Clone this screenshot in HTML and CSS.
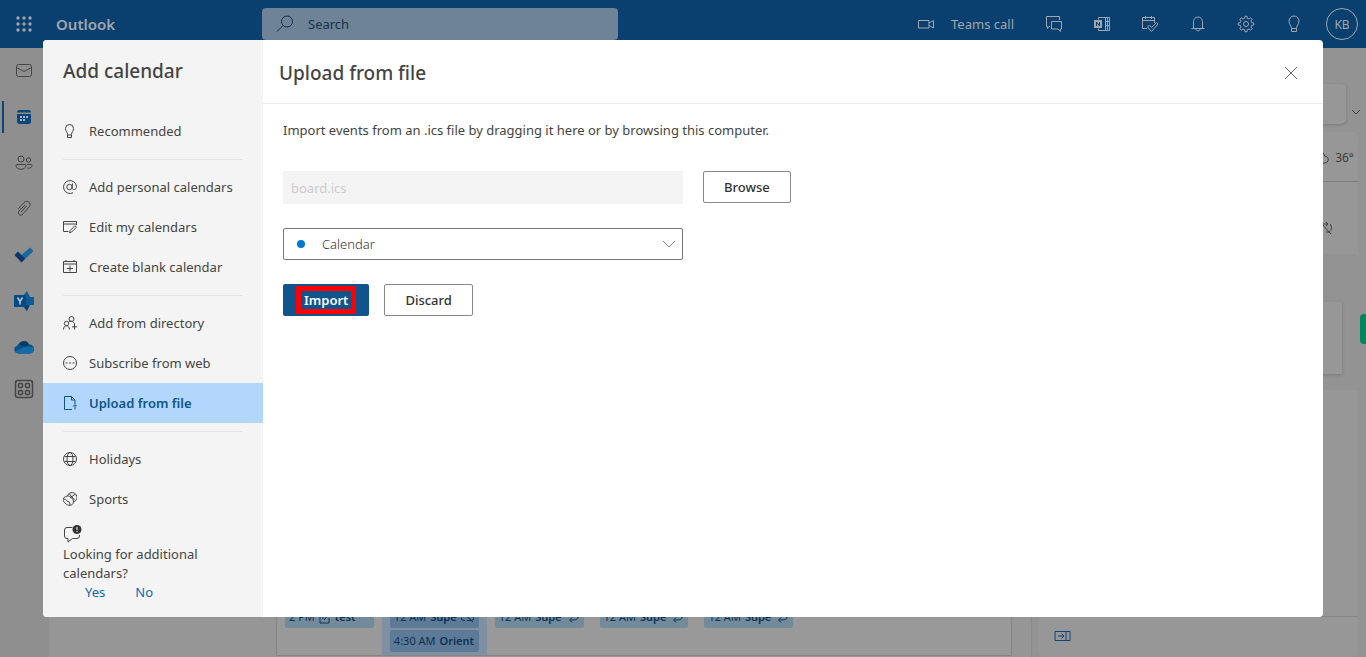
FILE: index.html
```html
<!DOCTYPE html>
<html lang="en">
<head>
<meta charset="utf-8">
<title>Outlook - Add calendar</title>
<link rel="stylesheet" href="styles.css">
</head>
<body>
<div class="app">
  <header class="topbar">
    <button class="waffle" aria-label="App launcher">
      <svg width="16" height="16" viewBox="0 0 16 16" fill="currentColor"><circle cx="2" cy="2" r="1.7"/><circle cx="8" cy="2" r="1.7"/><circle cx="14" cy="2" r="1.7"/><circle cx="2" cy="8" r="1.7"/><circle cx="8" cy="8" r="1.7"/><circle cx="14" cy="8" r="1.7"/><circle cx="2" cy="14" r="1.7"/><circle cx="8" cy="14" r="1.7"/><circle cx="14" cy="14" r="1.7"/></svg>
    </button>
    <span class="brand">Outlook</span>
    <label class="search">
      <svg class="line" width="18" height="18" viewBox="0 0 18 18"><circle cx="11" cy="6.5" r="5.5"/><path d="M7 10.5L1 16.5"/></svg>
      <input type="text" placeholder="Search" aria-label="Search">
    </label>
    <div class="tools">
      <button class="teams"><svg class="line" width="18" height="16" viewBox="0 0 18 16"><path d="M1.5 4.500h10.500v7.500H1.500zM12 7l4.500-2.500v7.500L12 9.500"/></svg>Teams call</button>
      <button class="tool" aria-label="Chat"><svg class="line" width="18" height="18" viewBox="0 0 18 18"><path d="M5 11.500H4L2.500 13.500V11.500H1.500V1.500h13V5M6.500 6.500h10v7.500h-1v2.500l-2.500-2.500H6.500z"/></svg></button>
      <button class="tool" aria-label="OneNote"><svg class="line" width="18" height="18" viewBox="0 0 18 18"><path d="M5.500 4.500v-2h11v13h-11v-2M12.500 2.500v13M12.500 6.500h4M12.500 10.500h4M14.500 2.500v13"/><path fill="currentColor" stroke="none" d="M1 5h8v8H1z"/><path d="M3.500 11V7l3 4V7" stroke="#0a406f"/></svg></button>
      <button class="tool" aria-label="My Day"><svg class="line" width="18" height="18" viewBox="0 0 18 18"><path d="M6 13.500H1.500V2.500h12V8M1.500 5.500h12M4.500 1v3M10.500 1v3M6.500 12l2-2 2 2.500 5-5 1.500 1.500-6.500 7.500z"/></svg></button>
      <button class="tool" aria-label="Notifications"><svg class="line" width="18" height="18" viewBox="0 0 18 18"><path d="M4.500 13V6.500a4.500 4.500 0 0 1 9 0V13M2.500 13.500h13M7 14c0 2.500 4 2.500 4 0"/></svg></button>
      <button class="tool" aria-label="Settings"><svg class="line" width="18" height="18" viewBox="0 0 18 18"><circle cx="9" cy="9" r="2.500"/><path d="M7.700 3.300L8 1.300h2l.3 2 1.800.7L13.700 2.800l1.500 1.500L14 5.900l.7 1.800 2 .3v2l-2 .3-.7 1.800 1.200 1.600-1.500 1.500-1.600-1.200-1.800.7-.3 2H8l-.3-2-1.800-.7-1.600 1.200-1.500-1.500L4 12.100l-.7-1.800-2-.3V8l2-.3L4 5.900 2.800 4.300l1.500-1.500L5.900 4z"/></svg></button>
      <button class="tool" aria-label="Tips"><svg class="line" width="18" height="18" viewBox="0 0 18 18"><path d="M6.500 16.500v-3C6.500 10.500 4 9.500 4 6a5 5 0 0 1 10 0c0 3.500-2.500 4.500-2.500 7.500v3zM6.500 13.500h5"/></svg></button>
      <button class="tool" aria-label="Account"><span class="avatar">KB</span></button>
    </div>
  </header>

  <div class="body">
    <nav class="rail" aria-label="Apps">
      <button aria-label="Mail"><svg class="line" width="18" height="18" viewBox="0 0 18 18"><rect x="1.500" y="2.500" width="15" height="12" rx="2"/><path d="M1.500 5.500L9 9.500l7.500-4"/></svg></button>
      <button class="current" aria-label="Calendar"><svg width="18" height="18" viewBox="0 0 18 18"><path fill="#0b477b" d="M2 4.500Q2 2 4.500 2h9Q16 2 16 4.500zM2 6h14v7.500q0 2.500-2.500 2.500h-9Q2 16 2 13.500z"/><path fill="#a5b2bc" d="M5 8h2v2H5zM8 8h2v2H8zM11 8h2v2h-2zM5 11h2v2H5zM8 11h2v2H8z"/></svg></button>
      <button aria-label="People"><svg class="line" width="18" height="18" viewBox="0 0 18 18"><circle cx="6" cy="5" r="3"/><circle cx="13.500" cy="6" r="2.200"/><path d="M2 10.500h8q1 0 1 1c0 5-10 5-10 0q0-1 1-1zM12 10.500h4q1 0 1 1c0 2-2 3-4.500 2.500"/></svg></button>
      <button aria-label="Files"><svg class="line" width="18" height="18" viewBox="0 0 18 18"><path d="M3 9l6-6.500c3-3 8 .500 5.500 4L8 14c-2.500 3-6 0-4-3l6-6M6 12l5.500-6"/></svg></button>
      <button aria-label="To Do"><svg width="20" height="18" viewBox="0 0 20 18"><path fill="#1c67a0" d="M7.500 16.500L4 12 16 1.500 19.500 5z"/><path fill="#0c356b" d="M.5 9L4 5.500 11 12.500 7.500 16.500z"/></svg></button>
      <button aria-label="Yammer"><svg width="20" height="20" viewBox="0 0 20 20"><path fill="#0d5c93" d="M9 5l4-5 3 6h4v8h-4l-3 6-4-5z"/><path fill="#073f70" d="M9 14h6l-2 6z"/><rect width="12" height="12" y="4" rx="1" fill="#074a83"/><path d="M3.500 6.500L6 10.500l2.500-4M6 10.500v3" fill="none" stroke="#b8c3cc" stroke-width="1.600"/></svg></button>
      <button aria-label="OneDrive"><svg width="20" height="14" viewBox="0 0 20 14"><path fill="#0c4f87" d="M3 6C6 0 13-1 15 4.500c3 0 5 2 5 4.500s-2 4.500-5 4.500H4.500C-.5 13.500-1 7 3 6z"/><path fill="#136ba3" d="M1 11.500L12 6l7.500 1.500c1.500 4-1.500 6-4.500 6H4.500q-2 0-3.500-2z"/><path fill="#063963" d="M5 4.500C8 0 13 0 15 4.500L12 7z"/></svg></button>
      <button class="more" aria-label="More apps"><svg class="line" width="20" height="20" viewBox="0 0 20 20" stroke-width="1.500"><rect x="1.500" y="1.500" width="17" height="17" rx="2.500"/><rect x="4.500" y="4.500" width="4" height="4" rx="1"/><rect x="11.500" y="4.500" width="4" height="4" rx="1"/><rect x="4.500" y="11.500" width="4" height="4" rx="1"/><rect x="11.500" y="11.500" width="4" height="4" rx="1"/></svg></button>
    </nav>

    <main class="calendar">
      <div class="grid">
        <div class="day"><div class="event"><span>2 PM</span><svg class="line" width="12" height="14" viewBox="0 0 12 14"><path d="M10 2H1v11h9V8M3 5h4M3 8h2M5 10l6-7"/></svg><b>test</b></div></div>
        <div class="day today"><div class="event"><span>12 AM</span><b>Supe</b><svg class="line" width="13" height="12" viewBox="0 0 13 12"><path d="M4 9.500H3a3 3 0 0 1 0-6h5M6 9.500h4a3 3 0 0 0 0-6M1 1l11 10"/></svg></div><div class="event"><span>4:30 AM</span><b>Orient</b></div></div>
        <div class="day"><div class="event"><span>12 AM</span><b>Supe</b><svg class="line" width="13" height="12" viewBox="0 0 13 12"><path d="M2 6c0-4 9-4 10 0 0 3-3 3-8 3M6 6.500L3.500 9 6 11.500"/></svg></div></div>
        <div class="day"><div class="event"><span>12 AM</span><b>Supe</b><svg class="line" width="13" height="12" viewBox="0 0 13 12"><path d="M2 6c0-4 9-4 10 0 0 3-3 3-8 3M6 6.500L3.500 9 6 11.500"/></svg></div></div>
        <div class="day"><div class="event"><span>12 AM</span><b>Supe</b><svg class="line" width="13" height="12" viewBox="0 0 13 12"><path d="M2 6c0-4 9-4 10 0 0 3-3 3-8 3M6 6.500L3.500 9 6 11.500"/></svg></div></div>
        <div class="day"></div>
        <div class="day"></div>
      </div>
    </main>

    <aside class="side">
      <div class="ribbon"><div class="ribbon-box"></div><svg class="line" width="10" height="16" viewBox="0 0 10 16"><path d="M1 2l4 4 4-4"/></svg></div>
      <div class="agenda">
        <div class="weather"><svg class="line" width="16" height="14" viewBox="0 0 16 14"><path d="M4 12a3.500 3.500 0 0 1 0-7C5 0 11 0 11.500 5c5 0 5 7 0 7z"/></svg>36°</div>
        <div class="slot"><svg class="line" width="13" height="14" viewBox="0 0 13 14"><path d="M4 11H3a4 4 0 0 1 0-8h6M7 1l2 2-2 2M7 11h3c3-1 3-6 1-8M2 2l10 11"/></svg></div>
        <div class="gap"><div class="card"></div></div>
        <div class="tasks"></div>
        <div class="foot"><svg class="line" width="17" height="12" viewBox="0 0 17 12"><path d="M1 1.500h15v9H1zM12 1.500v9M4 6h6M7.500 3.500L10 6 7.500 8.500"/></svg></div>
      </div>
      <button class="feedback" aria-label="Feedback"></button>
    </aside>
  </div>
</div>

<div class="dialog" role="dialog" aria-label="Add calendar">
  <div class="menu">
    <h1>Add calendar</h1>
    <nav>
      <button class="item"><svg class="line" viewBox="0 0 14 14"><path d="M4.500 13.500v-3C4.500 8 2.500 7.500 2.500 4.500a4 4 0 0 1 8 0c0 3-2 3.500-2 6v3zM4.500 11h4"/></svg>Recommended</button>
      <hr>
      <button class="item"><svg class="line" viewBox="0 0 14 14"><circle cx="6.500" cy="7" r="2.700"/><path d="M9.500 3.500L9 8c0 2 4.500 2.500 4.500-1.500A6.500 6.500 0 1 0 10 12.800"/></svg>Add personal calendars</button>
      <button class="item"><svg class="line" viewBox="0 0 14 14"><path d="M5.500 11.500h-5v-10h13V5M.5 4h13M6.500 12.800l.7-2.300L12 5.700l1.500 1.500-4.800 4.800z"/></svg>Edit my calendars</button>
      <button class="item"><svg class="line" viewBox="0 0 14 14"><path d="M.5 1.500h13v11H.5zM.5 4h13M3 0v1.500M11 0v1.500M7 5.500v6M4 8.500h6"/></svg>Create blank calendar</button>
      <hr>
      <button class="item"><svg class="line" viewBox="0 0 14 14"><circle cx="8.500" cy="3" r="2.500"/><circle cx="3.500" cy="7.500" r="2.200"/><path d="M.5 13.500c0-5 6-5 6 0M5.500 6c2-1.500 5-1 6 2M11.500 8v5.500M9 10.800h5"/></svg>Add from directory</button>
      <button class="item"><svg class="line" viewBox="0 0 14 14"><circle cx="7" cy="7" r="6.500"/><path d="M2.500 7h2M6 7h2M9.500 7h2"/></svg>Subscribe from web</button>
      <button class="item selected"><svg class="line" viewBox="0 0 14 14"><path d="M9 13.500H1.500V.5h7L12 4v4M8.500.5V4H12M12 13.500V9M10 10.500L12 8.500l2 2"/></svg>Upload from file</button>
      <hr>
      <button class="item"><svg class="line" viewBox="0 0 14 14"><circle cx="7" cy="7" r="6.500"/><ellipse cx="7" cy="7" rx="3" ry="6.500"/><path d="M1.500 4.500h11M1.500 9.500h11"/></svg>Holidays</button>
      <button class="item"><svg class="line" viewBox="0 0 14 14"><path d="M4.500 4a4.800 4.800 0 1 1 6 6M4.500 4c3 0 6 3 6 6M6 1.500l6 7M12.500 2L7 6M4.500 4C-1 5-.5 9 2 11c3 3.500 8 3 8.500-1M1 7c3 0 2 2.500 4 2.500S7 12 7 13"/></svg>Sports</button>
    </nav>
    <div class="ask">
      <svg width="20" height="18" viewBox="0 0 20 18"><path d="M9.500 2.500H4Q1.500 2.500 1.500 5v6q0 2.500 2.500 2.500h1V17l4.500-3.500H14q2.500 0 2.500-2.500v-1" fill="none" stroke="#444"/><circle cx="14" cy="4.500" r="4.500" fill="#333"/><path d="M14 2v3M14 6v1.200" stroke="#fff"/></svg>
      <p>Looking for additional calendars?</p>
      <div class="answers"><a href="#yes">Yes</a><a href="#no">No</a></div>
    </div>
  </div>

  <section class="panel">
    <div class="panel-head">
      <h2>Upload from file</h2>
      <button class="close" aria-label="Close"><svg class="line" width="14" height="14" viewBox="0 0 14 14"><path d="M1 1l12 12M13 1L1 13"/></svg></button>
    </div>
    <form class="form">
      <label class="intro" for="file">Import events from an .ics file by dragging it here or by browsing this computer.</label>
      <div class="row browse"><input class="file" id="file" type="text" value="board.ics" disabled><button class="btn" type="button">Browse</button></div>
      <div class="picker">
        <select aria-label="Calendar"><option>Calendar</option></select>
        <span class="dot"></span>
        <svg class="line chevron" width="14" height="8" viewBox="0 0 14 8"><path d="M1 1l6 6 6-6"/></svg>
      </div>
      <div class="row actions"><button class="btn primary" type="button"><span class="mark">Import</span></button><button class="btn" type="button">Discard</button></div>
    </form>
  </section>
</div>
</body>
</html>
```

FILE: styles.css
```css
* { box-sizing: border-box; }
html, body { height: 100%; }
body { margin: 0; font: 13px/20px "Noto Sans", "Open Sans", sans-serif; color: #444; overflow: hidden; }
button { border: 0; background: none; padding: 0; font: inherit; color: inherit; display: flex; align-items: center; justify-content: center; }
.line { fill: none; stroke: currentColor; flex: none; }

.app { height: 100%; display: flex; flex-direction: column; background: #969696; }
.topbar { height: 48px; flex: none; display: flex; align-items: center; background: #0a406f; color: #a0a6ac; }
.waffle { width: 48px; height: 48px; }
.brand { width: 206px; padding-left: 8px; font-size: 15px; font-weight: 600; }
.search { margin-left: 8px; width: 356px; height: 32px; padding: 0 14px; display: flex; align-items: center; gap: 14px; background: #6e8496; border-radius: 4px; color: #0d304e; }
.search input { flex: 1; min-width: 0; border: 0; padding: 0; background: none; font: inherit; color: inherit; }
.search input::placeholder { color: #17334b; opacity: 1; }
.tools { margin-left: auto; display: flex; align-items: center; }
.teams { gap: 16px; padding-right: 16px; }
.tool { width: 48px; height: 48px; }
.avatar { width: 32px; height: 32px; border: 1px solid; border-radius: 50%; font-size: 12px; line-height: 31px; }

.body { flex: 1; min-height: 0; display: flex; }
.rail { width: 49px; background: #8f8f8f; color: #444; }
.rail button { width: 48px; height: 46px; border-left: 2px solid transparent; padding-right: 2px; }
.rail .current { height: 32px; margin: 7px 0 7px 2px; padding-right: 6px; border-color: #0b477b; }
.rail .more { height: 38px; }

.calendar { flex: 1; min-width: 0; display: flex; padding: 0 19px 1px 227px; }
.grid { flex: 1; display: grid; grid-template-columns: repeat(7, minmax(0, 1fr)); border: 1px solid #858585; border-width: 0 1px 1px; background: #999; color: #0c3353; }
.day { padding: 558px 8px 0; display: flex; flex-direction: column; gap: 2px; }
.today { background: #7f90a2; }
.event { height: 22px; flex: none; padding: 0 4px; display: flex; align-items: center; gap: 4px; overflow: hidden; white-space: nowrap; font-size: 11px; background: #738a9b; border-radius: 2px; }
.today .event { background: #5d7a97; }
.event b { font-weight: 600; }

.side { width: 335px; display: flex; flex-direction: column; position: relative; border-left: 1px solid #8a8a8a; padding-left: 6px; background: #939393; }
.ribbon { height: 84px; display: flex; gap: 5px; padding-top: 36px; align-items: flex-end; padding-bottom: 8px; padding-right: 5px; }
.ribbon-box { flex: 1; height: 40px; background: #979797; border-radius: 0 5px 5px 0; box-shadow: 0 1px 3px #6668; }
.agenda { flex: 1; display: flex; flex-direction: column; margin-right: 8px; background: #979797; border-radius: 5px; color: #3c3c3c; }
.weather { height: 50px; flex: none; display: flex; align-items: center; justify-content: flex-end; gap: 6px; padding: 2px 4px 0 0; border-bottom: 1px solid #7d7d7d; font-size: 12px; }
.slot { height: 72px; flex: none; display: flex; justify-content: flex-end; align-items: center; padding: 20px 26px 0 0; }
.gap { height: 136px; flex: none; padding: 48px 16px 16px; background: #939393; }
.card { height: 72px; background: #979797; box-shadow: 0 1px 3px #6668; }
.tasks { height: 227px; flex: none; border-bottom: 1px solid #858585; }
.foot { padding: 13px 16px; color: #0b477b; display: flex; }
.feedback { position: absolute; right: 0; top: 266px; width: 6px; height: 30px; background: #00865f; border-radius: 4px 0 0 4px; }

.dialog { position: absolute; inset: 40px 43px; display: flex; background: #fff; border-radius: 4px; overflow: hidden; }
.menu { width: 220px; flex: none; background: #f4f4f4; }
h1, h2 { margin: 0; font-size: 19px; line-height: 28px; font-weight: 500; color: #444; }
h1 { height: 71px; padding: 17px 20px 0; }
.item { width: 100%; height: 40px; padding: 0 20px; justify-content: flex-start; gap: 12px; }
.item svg { width: 14px; height: 14px; }
.selected { background: #b3d6fc; color: #0f548c; font-weight: 600; }
hr { height: 1px; border: 0; background: #e6e6e6; margin: 8px 20px 7px; }
.ask { padding: 6px 20px 0; line-height: 19px; }
.ask svg { display: block; }
.ask p { margin: 2px 0 0; }
.answers { display: flex; gap: 30px; padding-left: 22px; }
.answers a { color: #1267b4; text-decoration: none; }

.panel { flex: 1; min-width: 0; }
.panel-head { height: 64px; padding: 2px 24px 0 16px; display: flex; align-items: center; justify-content: space-between; border-bottom: 1px solid #eee; }
.close { width: 16px; height: 32px; color: #666; }
.form { padding: 16px 20px; display: flex; flex-direction: column; }
.intro { margin-bottom: 31px; }
.row { display: flex; }
.browse { gap: 20px; margin-bottom: 24px; }
.file { width: 400px; height: 33px; padding: 0 8px; border: 0; background: #f4f4f4; color: #ccc; font: inherit; }
.btn { height: 32px; padding: 0 20px; border: 1px solid #8a8886; border-radius: 2px; background: #fff; font-weight: 500; color: #333; }
.picker { position: relative; width: 400px; margin-bottom: 24px; }
select { appearance: none; width: 100%; height: 32px; padding: 0 38px; border: 1px solid #777; border-radius: 2px; background: #fff; font: inherit; font-weight: 300; color: #333; display: block; }
.dot { position: absolute; left: 14px; top: 12px; width: 8px; height: 8px; border-radius: 50%; background: #0078d4; }
.chevron { position: absolute; right: 7px; top: 12px; color: #888; }
.actions { gap: 15px; }
.primary { background: #0f548c; border: 0; color: #fff; padding: 0 13px; font-weight: 600; }
.mark { border: 5px solid #f00; padding: 0 3px; line-height: 18px; }
```
